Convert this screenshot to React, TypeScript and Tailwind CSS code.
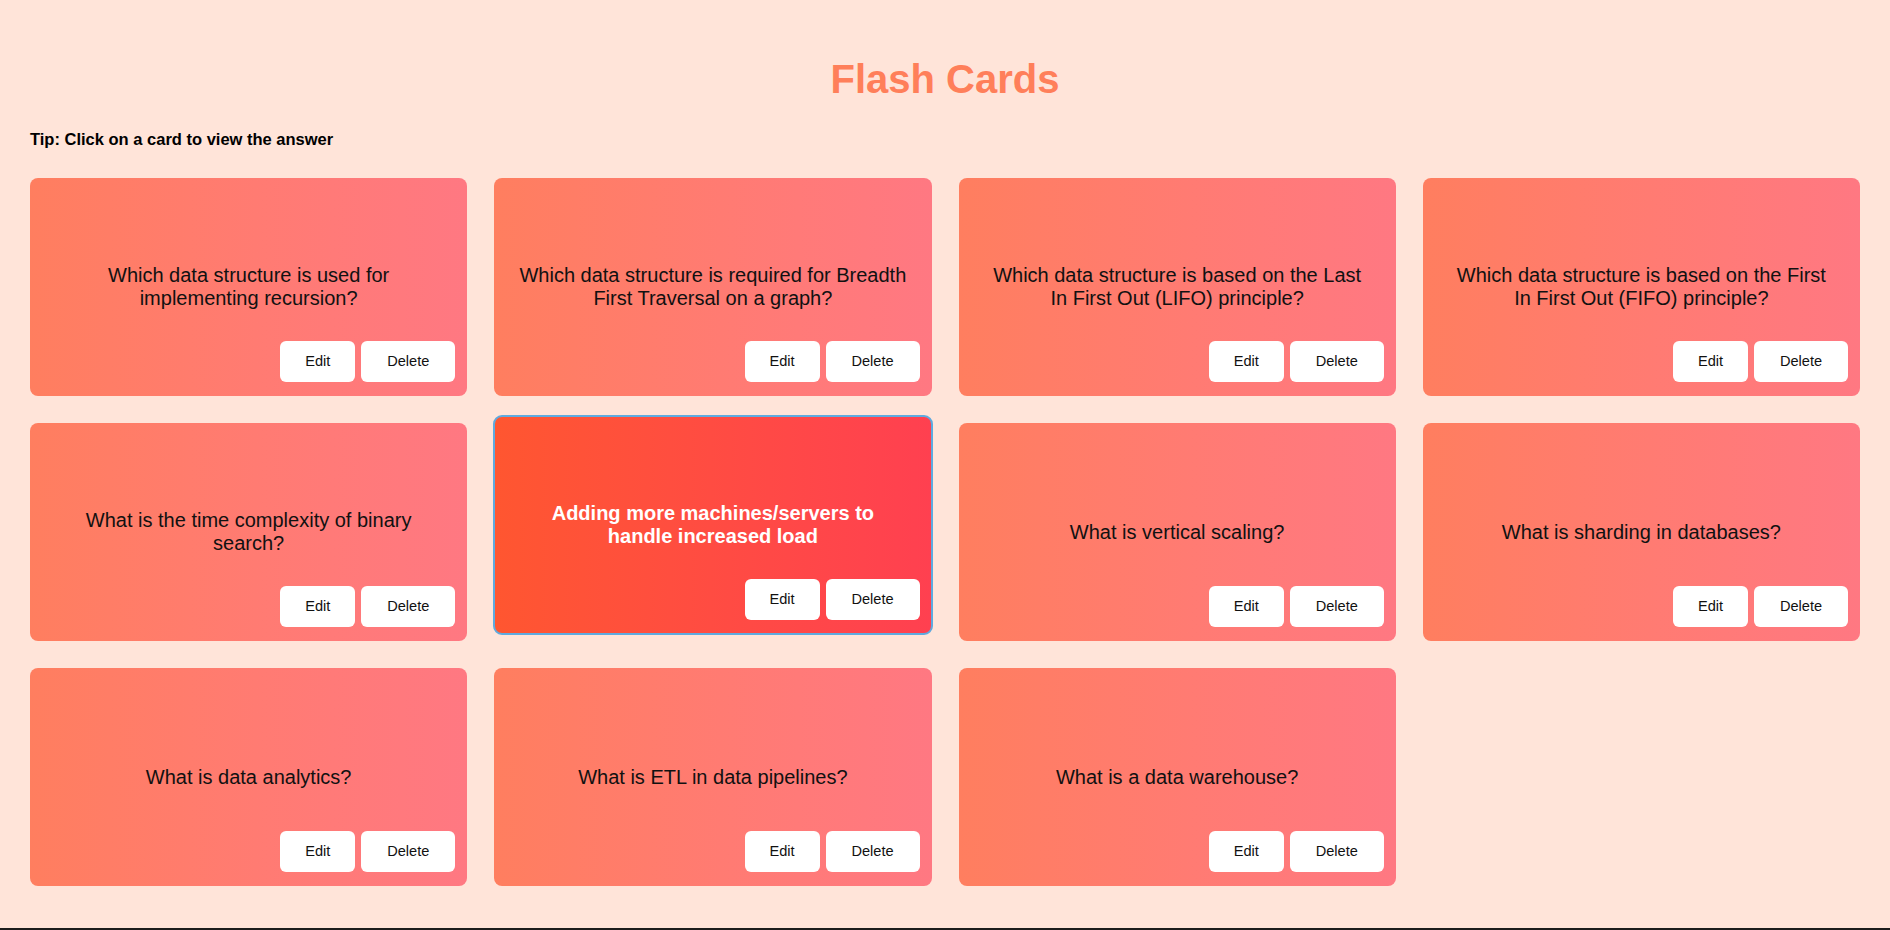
type Card = {
  text: string
  flipped?: boolean
}

const cards: Card[] = [
  { text: 'Which data structure is used for implementing recursion?' },
  { text: 'Which data structure is required for Breadth First Traversal on a graph?' },
  { text: 'Which data structure is based on the Last In First Out (LIFO) principle?' },
  { text: 'Which data structure is based on the First In First Out (FIFO) principle?' },
  { text: 'What is the time complexity of binary search?' },
  { text: 'Adding more machines/servers to handle increased load', flipped: true },
  { text: 'What is vertical scaling?' },
  { text: 'What is sharding in databases?' },
  { text: 'What is data analytics?' },
  { text: 'What is ETL in data pipelines?' },
  { text: 'What is a data warehouse?' },
]

function FlashCard({ card }: { card: Card }) {
  const face = card.flipped
    ? 'bg-gradient-to-r from-[#ff5630] to-[#ff4050] text-white font-bold -translate-y-[7px] outline-2 outline-[#5faadf] outline-offset-[-1px]'
    : 'bg-gradient-to-r from-[#ff7e5f] to-[#ff7882] text-[#111]'

  return (
    <div className={`relative flex h-[218px] items-center justify-center rounded-lg px-6 text-center text-[20px] leading-[23px] ${face}`}>
      <p>{card.text}</p>
      <div className="absolute bottom-[14px] right-[12px] flex gap-[6px]">
        <button className="h-[41px] w-[75px] rounded-md bg-white text-[14.6px] font-normal text-[#111]">Edit</button>
        <button className="h-[41px] w-[94px] rounded-md bg-white text-[14.6px] font-normal text-[#111]">Delete</button>
      </div>
    </div>
  )
}

export default function App() {
  return (
    <div className="flex min-h-[930px] flex-col bg-[#ffe4d9] font-['Liberation_Sans',Arial,sans-serif]">
      <div className="flex-1 px-[30px] pt-[56px]">
        <h1 className="text-center text-[40px] font-bold leading-[46px] text-[#ff7f5a]">Flash Cards</h1>
        <p className="mt-[28px] text-[16.5px] font-bold leading-[18px] text-black">Tip: Click on a card to view the answer</p>
        <div className="mt-[30px] grid grid-cols-4 gap-[27px]">
          {cards.map((card) => (
            <FlashCard card={card} key={card.text} />
          ))}
        </div>
      </div>
      <div className="h-[2px] bg-[#1c1c1c]" />
    </div>
  )
}
